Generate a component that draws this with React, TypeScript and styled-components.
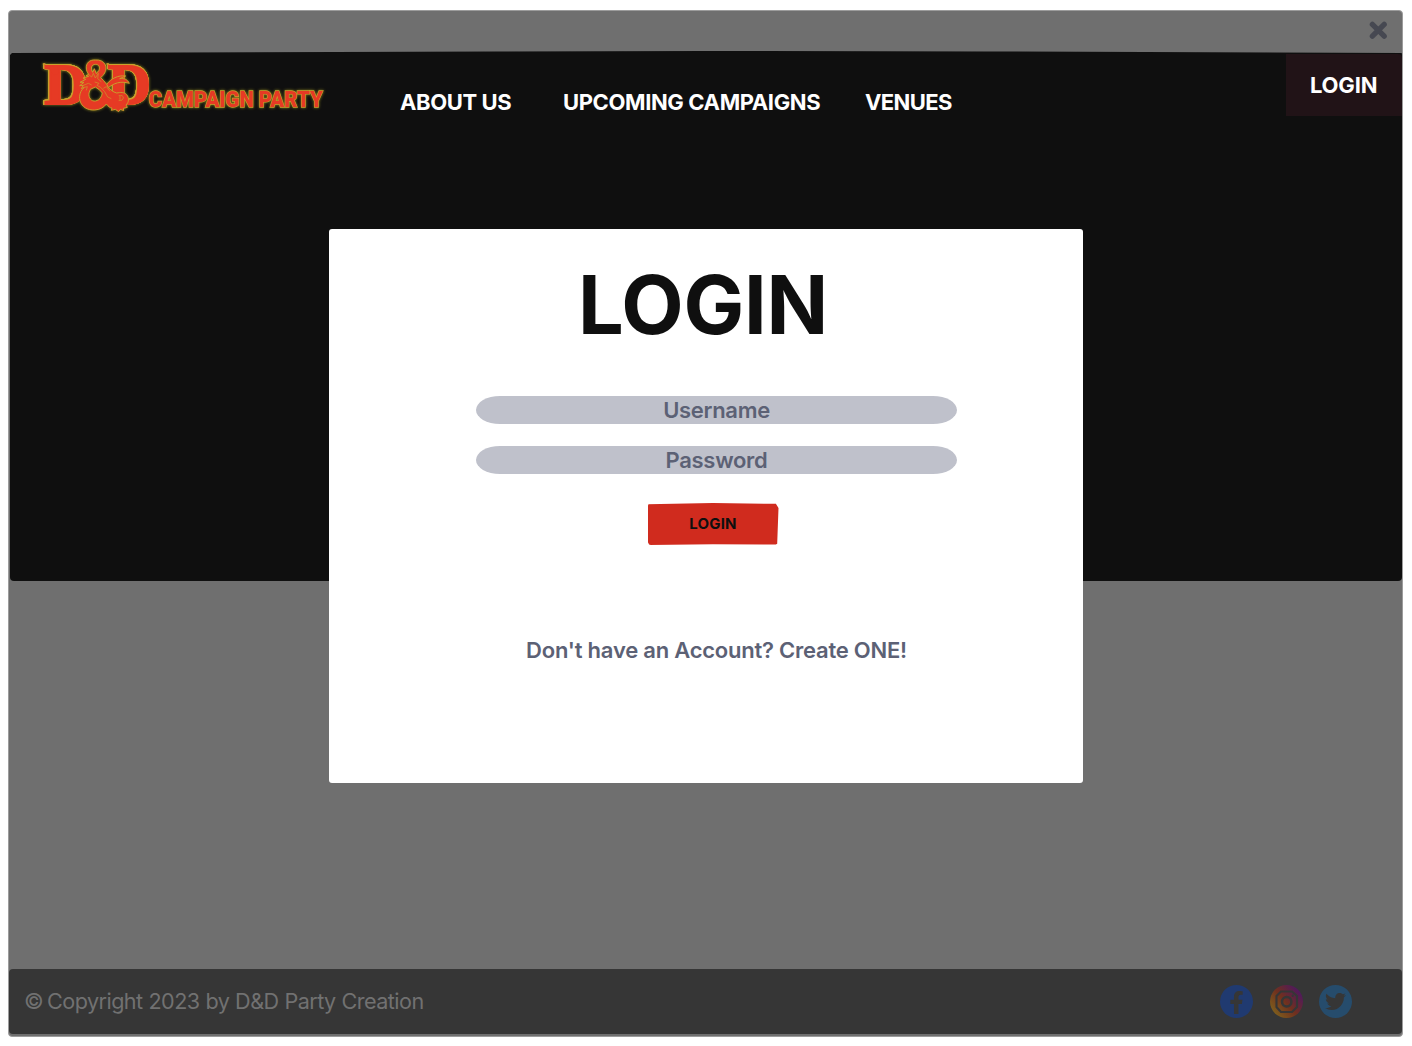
import React from "react";
import styled, { createGlobalStyle } from "styled-components";
import { FaFacebookF, FaTwitter } from "react-icons/fa";

const Global = createGlobalStyle`
  *{box-sizing:border-box}
  body{margin:0;background:#fff;font-family:Inter,"Liberation Sans",sans-serif}
`;
const Window = styled.div`
  margin:10px 9px 0 8px;width:1395px;height:1027px;background:#6f6f6f;border-radius:4px;
  display:flex;flex-direction:column;border:1px solid #9c9c9c;position:relative;
`;
const TitleBar = styled.div`
  height:40px;display:flex;justify-content:flex-end;padding:10px 14px 0 0;
`;
const Header = styled.header`
  height:530px;background:#0f0f0f;border-radius:4px;margin:0 0 0 1px;
  display:flex;align-items:flex-start;
  clip-path:polygon(0 4px,2px 2px,12% 1.5px,35% 0.5px,50% 0,70% 0.5px,100% 2px,100% 100%,0 100%);
`;
const Brand = styled.div`
  width:390px;height:70px;
`;
const BrandArt = styled.svg`
  display:block;filter:drop-shadow(0 0 1.6px #8a8420);
`;
const Initials = styled.g`
  filter:drop-shadow(.6px 0 0 #c9a02c) drop-shadow(-.6px 0 0 #c9a02c) drop-shadow(0 .6px 0 #c9a02c) drop-shadow(0 -.6px 0 #c9a02c);
`;
const Nav = styled.nav`
  display:flex;flex:1;padding-top:38px;
`;
const NavLink = styled.a<{ $width: number; $track: number }>`
  width:${p => p.$width}px;font-size:22px;line-height:26px;font-weight:700;color:#fff;
  letter-spacing:${p => p.$track}px;white-space:nowrap;
`;
const LoginTab = styled.button`
  border:0;background:#211317;color:#fff;width:116px;height:62px;margin-top:3px;padding:0 0 0 24px;
  font:700 22px/26px Inter,sans-serif;letter-spacing:-0.2px;text-align:left;border-radius:0 4px 0 0;
`;
const Spacer = styled.div`flex:1;`;
const Footer = styled.footer`
  height:65px;margin-bottom:2px;background:#363636;border-radius:4px;display:flex;align-items:center;
  justify-content:space-between;padding:0 50px 0 15px;
`;
const Copyright = styled.span`
  font-size:21.6px;color:#717171;letter-spacing:-0.54px;word-spacing:0.3px;white-space:nowrap;padding-bottom:2px;
`;
const Mark = styled.span`
  margin-right:-2px;
`;
const Social = styled.div`display:flex;gap:16.5px;`;
const Badge = styled.span<{ $bg: string; $drop?: number }>`
  width:33px;height:33px;border-radius:50%;background:${p => p.$bg};color:#363636;
  display:flex;align-items:center;justify-content:center;padding-top:${p => p.$drop ?? 0}px;
`;
const Dialog = styled.form`
  position:absolute;left:320px;top:218px;width:754px;height:554px;border-radius:3px;background:#fff;
  display:flex;flex-direction:column;align-items:center;padding-left:21px;
`;
const Title = styled.h1`
  margin:27px 27px 0 0;font-size:81px;line-height:98px;height:98px;font-weight:700;letter-spacing:-0.2px;color:#0f0f0f;
`;
const Field = styled.input`
  width:481px;height:28px;border:0;padding:0;border-radius:24px/14px;background:#bfc1cb;
  text-align:center;font:600 22px/28px Inter,sans-serif;letter-spacing:-0.3px;margin-top:22px;
  &:first-of-type{margin-top:42px;}
  &::placeholder{color:#5c6175;opacity:1;}
`;
const Submit = styled.button`
  width:131px;height:42px;margin:29px 7px 0 0;border:0;background:#d02b1e;color:#0f0f0f;border-radius:3px;
  font:700 15px/42px Inter,sans-serif;letter-spacing:0.2px;padding:0;
  clip-path:polygon(0 3%,50% 0,98% 2%,100% 12%,99% 97%,98% 99%,50% 98%,1% 100%,0 90%);
`;
const Signup = styled.a`
  margin-top:92px;font-size:22px;line-height:26px;font-weight:600;letter-spacing:-0.23px;color:#5c6175;
`;

const RED = "#e63a24";
const GOLD = "#c9a02c";

function Initial({ x }: { x: number }) {
  return (
    <g transform={`translate(${x} 104.2) scale(1.06 1)`} fill={RED}>
      <text fontFamily="Liberation Serif, serif" fontWeight="700" fontSize="56" stroke={RED} strokeWidth="2">D</text>
      <path d="M-.8-40Q4-37.4 12-37.8L14-31 8.8-29Q6.4-35-.8-40Z" />
    </g>
  );
}

function DragonAmpersand() {
  return (
    <g transform="translate(74 56) scale(.33333)" stroke={GOLD} strokeWidth="2.8" strokeLinejoin="round">
      <path
        fill={RED}
        d="M103 95C119 82 139 74 166 82C161 71 151 66 137 68L155 60C132 57 111 68 98 85Z"
      />
      <path
        fill={RED}
        fillRule="evenodd"
        d="M64 12C46 11 36 22 37 36C37 44 40 49 44 55L36 59L44 61L27 66L35 70L18 79L30 79L17 89L28 88L22 98L31 94C20 103 14 118 18 134C23 153 41 163 62 162C78 161 90 154 97 144C104 152 108 156 114 156L112 163L124 160L134 167L139 160L149 164L148 157L160 154L156 147C165 139 166 126 158 116C151 108 139 109 128 111C116 108 111 101 103 95L98 85L89 74L80 65L87 58C95 49 98 37 94 27C89 16 78 11 64 12ZM65 25C75 25 79 34 75 43L67 53L61 38L56 49C49 37 52 25 65 25ZM49 100L64 93L76 101L85 111C83 123 77 133 65 135C52 137 43 126 45 111Z"
      />
      <g fill="none" strokeWidth="1.9">
        <path d="M43 55L53 63L58 52L64 66L73 52L71 68L82 77M28 88L43 82L53 87M62 78L75 82L69 88L80 94L92 107L101 123L112 128M31 94L40 92L37 103M88 97L97 92L108 106" />
        <path d="M134 119Q148 116 148 126Q147 135 134 134M138 120V132" />
      </g>
    </g>
  );
}

export default function App() {
  return (
    <>
      <Global />
      <Window>
        <TitleBar>
          <svg width="19" height="19" viewBox="0 0 18 18" stroke="#464851" strokeWidth="5" strokeLinecap="round">
            <path d="M3.2 3.2 14.4 14.4M14.4 3.2 3.2 14.4" />
          </svg>
        </TitleBar>
        <Header>
          <Brand>
            <BrandArt width="330" height="70" viewBox="10 51 330 70">
              <Initials>
                <Initial x={44.4} />
                <Initial x={108} />
              </Initials>
              <DragonAmpersand />
              <text
                x="148.8" y="107" fontFamily="Roboto, sans-serif" fontWeight="900" fontSize="22.2"
                textLength="174" lengthAdjust="spacingAndGlyphs"
                fill={RED} stroke={GOLD} strokeWidth="1.3" paintOrder="stroke"
              >
                CAMPAIGN PARTY
              </text>
            </BrandArt>
          </Brand>
          <Nav>
            <NavLink $width={163} $track={-0.4}>ABOUT US</NavLink>
            <NavLink $width={302} $track={-0.38}>UPCOMING CAMPAIGNS</NavLink>
            <NavLink $width={100} $track={-0.6}>VENUES</NavLink>
          </Nav>
          <LoginTab>LOGIN</LoginTab>
        </Header>
        <Spacer />
        <Footer>
          <Copyright><Mark>©</Mark> Copyright 2023 by D&amp;D Party Creation</Copyright>
          <Social>
            <Badge $bg="#203a70" $drop={2}><FaFacebookF size={23} /></Badge>
            <Badge $bg="linear-gradient(50deg,#80641c 8%,#70301e 48%,#50195c 85%)">
              <svg width="33" height="33" viewBox="0 0 33 33" fill="none" stroke="#363636" strokeWidth="2.1">
                <path d="M11 6.5H22L27 11V22L22 27H11L6.500 22V11Z" />
                <circle cx="16.700" cy="16.700" r="4.700" strokeWidth="2.500" />
                <circle cx="22.700" cy="10.700" r=".6" strokeWidth="1.200" />
              </svg>
            </Badge>
            <Badge $bg="#264c6c"><FaTwitter size={21} /></Badge>
          </Social>
        </Footer>
        <Dialog>
          <Title>LOGIN</Title>
          <Field placeholder="Username" />
          <Field placeholder="Password" type="password" />
          <Submit type="button">LOGIN</Submit>
          <Signup>Don't have an Account? Create ONE!</Signup>
        </Dialog>
      </Window>
    </>
  );
}
